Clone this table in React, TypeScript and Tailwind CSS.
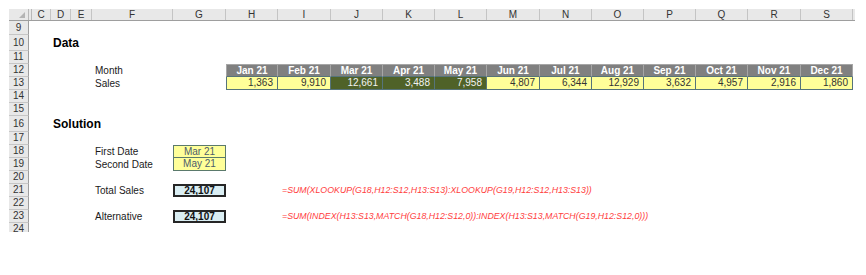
import type { ReactNode } from 'react'

const COLS = [
  { key: 'C', w: 'w-[19px]' },
  { key: 'D', w: 'w-[20px]' },
  { key: 'E', w: 'w-[21px]' },
  { key: 'F', w: 'w-[81px]' },
  { key: 'G', w: 'w-[53px]' },
  { key: 'H', w: 'w-[52px]' },
  { key: 'I', w: 'w-[53px]' },
  { key: 'J', w: 'w-[52px]' },
  { key: 'K', w: 'w-[52px]' },
  { key: 'L', w: 'w-[52px]' },
  { key: 'M', w: 'w-[53px]' },
  { key: 'N', w: 'w-[52px]' },
  { key: 'O', w: 'w-[52px]' },
  { key: 'P', w: 'w-[52px]' },
  { key: 'Q', w: 'w-[52px]' },
  { key: 'R', w: 'w-[53px]' },
  { key: 'S', w: 'w-[52px]' },
]

const ROWS = [
  { n: 9, h: 'h-[14px]' },
  { n: 10, h: 'h-[16px]' },
  { n: 11, h: 'h-[13px]' },
  { n: 12, h: 'h-[13px]' },
  { n: 13, h: 'h-[13px]' },
  { n: 14, h: 'h-[13px]' },
  { n: 15, h: 'h-[13px]' },
  { n: 16, h: 'h-[16px]' },
  { n: 17, h: 'h-[13px]' },
  { n: 18, h: 'h-[13px]' },
  { n: 19, h: 'h-[13px]' },
  { n: 20, h: 'h-[13px]' },
  { n: 21, h: 'h-[13px]' },
  { n: 22, h: 'h-[13px]' },
  { n: 23, h: 'h-[13px]' },
  { n: 24, h: 'h-[13px]' },
]

const months = ['Jan 21', 'Feb 21', 'Mar 21', 'Apr 21', 'May 21', 'Jun 21', 'Jul 21', 'Aug 21', 'Sep 21', 'Oct 21', 'Nov 21', 'Dec 21']
const sales = ['1,363', '9,910', '12,661', '3,488', '7,958', '4,807', '6,344', '12,929', '3,632', '4,957', '2,916', '1,860']
const dataCols = ['H', 'I', 'J', 'K', 'L', 'M', 'N', 'O', 'P', 'Q', 'R', 'S']

const HEAD = 'justify-center bg-[#808080] text-white font-bold border-t border-r border-b border-t-[#a6a6a6] border-r-[#a6a6a6] border-b-[#56747a]'
const HEAD_FIRST = 'justify-center bg-[#808080] text-white font-bold border-t border-r border-b border-l border-t-[#a6a6a6] border-r-[#a6a6a6] border-l-[#a6a6a6] border-b-[#56747a]'
const SALE = 'justify-end pr-[4px] bg-[#ffff99] text-[#333] border-r border-b border-[#56747a]'
const SALE_FIRST = 'justify-end pr-[4px] bg-[#ffff99] text-[#333] border-r border-b border-l border-[#56747a]'
const SALE_HI = 'justify-end pr-[4px] bg-[#4f6228] text-[#f2f2f2] border-r border-b border-[#56747a]'

const FORMULA = 'pl-[4px] italic text-[#ff3c3c] overflow-visible'

type Cell = { v?: ReactNode; cls: string; size?: string }

const cells: Record<string, Cell> = {
  D10: { v: 'Data', cls: 'pl-[2px] font-bold text-black', size: 'text-[12px]' },
  F12: { v: 'Month', cls: 'pl-[3px]' },
  F13: { v: 'Sales', cls: 'pl-[3px]' },
  D16: { v: 'Solution', cls: 'pl-[2px] font-bold text-black', size: 'text-[12px]' },
  F18: { v: 'First Date', cls: 'pl-[3px]' },
  G18: { v: 'Mar 21', cls: 'justify-center bg-[#ffff99] text-[#4d5c6b] border border-[#5b7a6c]' },
  F19: { v: 'Second Date', cls: 'pl-[3px]' },
  G19: { v: 'May 21', cls: 'justify-center bg-[#ffff99] text-[#4d5c6b] border-l border-r border-b border-[#5b7a6c]' },
  F21: { v: 'Total Sales', cls: 'pl-[3px]' },
  G21: { v: '24,107', cls: 'justify-center bg-[#daeef3] font-bold text-[#111] border-2 border-[#262626]' },
  I21: { v: '=SUM(XLOOKUP(G18,H12:S12,H13:S13):XLOOKUP(G19,H12:S12,H13:S13))', cls: FORMULA, size: 'text-[8.8px]' },
  F23: { v: 'Alternative', cls: 'pl-[3px]' },
  G23: { v: '24,107', cls: 'justify-center bg-[#daeef3] font-bold text-[#111] border-2 border-[#262626]' },
  I23: { v: '=SUM(INDEX(H13:S13,MATCH(G18,H12:S12,0)):INDEX(H13:S13,MATCH(G19,H12:S12,0)))', cls: FORMULA, size: 'text-[8.8px]' },
}

dataCols.forEach((c, i) => {
  cells[`${c}12`] = { v: months[i], cls: i === 0 ? HEAD_FIRST : HEAD }
  cells[`${c}13`] = { v: sales[i], cls: i === 0 ? SALE_FIRST : i >= 2 && i <= 4 ? SALE_HI : SALE }
})

function ColumnHeader() {
  return (
    <div className="flex h-[12px] bg-[#e8e8e8] border-b border-[#9e9e9e]">
      {/* select-all corner */}
      <div className="relative w-[20px] shrink-0 border-r border-[#b8b8b8]">
        <svg className="absolute right-[3px] bottom-[2px]" width="6" height="6" viewBox="0 0 6 6">
          <polygon points="6,0 6,6 0,6" fill="#b4b4b4" />
        </svg>
      </div>
      <div className="w-[3px] shrink-0 border-r border-[#b8b8b8]" />
      {COLS.map((c) => (
        <div
          key={c.key}
          className={`${c.w} shrink-0 flex items-center justify-center border-r border-[#c4c4c4] text-[10px] leading-none text-[#333]`}
        >
          {c.key}
        </div>
      ))}
      <div className="flex-1" />
    </div>
  )
}

function SheetRow({ n, h }: { n: number; h: string }) {
  return (
    <div className={`flex ${h}`}>
      <div className="w-[20px] shrink-0 flex items-center justify-center bg-[#e8e8e8] border-r border-b border-r-[#9e9e9e] border-b-[#c6c6c6] text-[10px] leading-none text-[#333]">
        {n}
      </div>
      <div className="w-[3px] shrink-0" />
      {COLS.map((c) => {
        const cell = cells[`${c.key}${n}`]
        return (
          <div
            key={c.key}
            className={`${c.w} shrink-0 flex items-center whitespace-nowrap leading-none text-[#1a1a1a] ${cell?.size ?? 'text-[10px]'} ${cell ? cell.cls : ''}`}
          >
            {cell?.v}
          </div>
        )
      })}
    </div>
  )
}

export default function App() {
  return (
    <div className="w-[866px] h-[275px] bg-white pl-[9px] pt-[9px] font-['Liberation_Sans',Arial,sans-serif]">
      <div className="w-[846px] h-[223px] overflow-hidden">
        <ColumnHeader />
        {ROWS.map((r) => (
          <SheetRow key={r.n} n={r.n} h={r.h} />
        ))}
      </div>
    </div>
  )
}
